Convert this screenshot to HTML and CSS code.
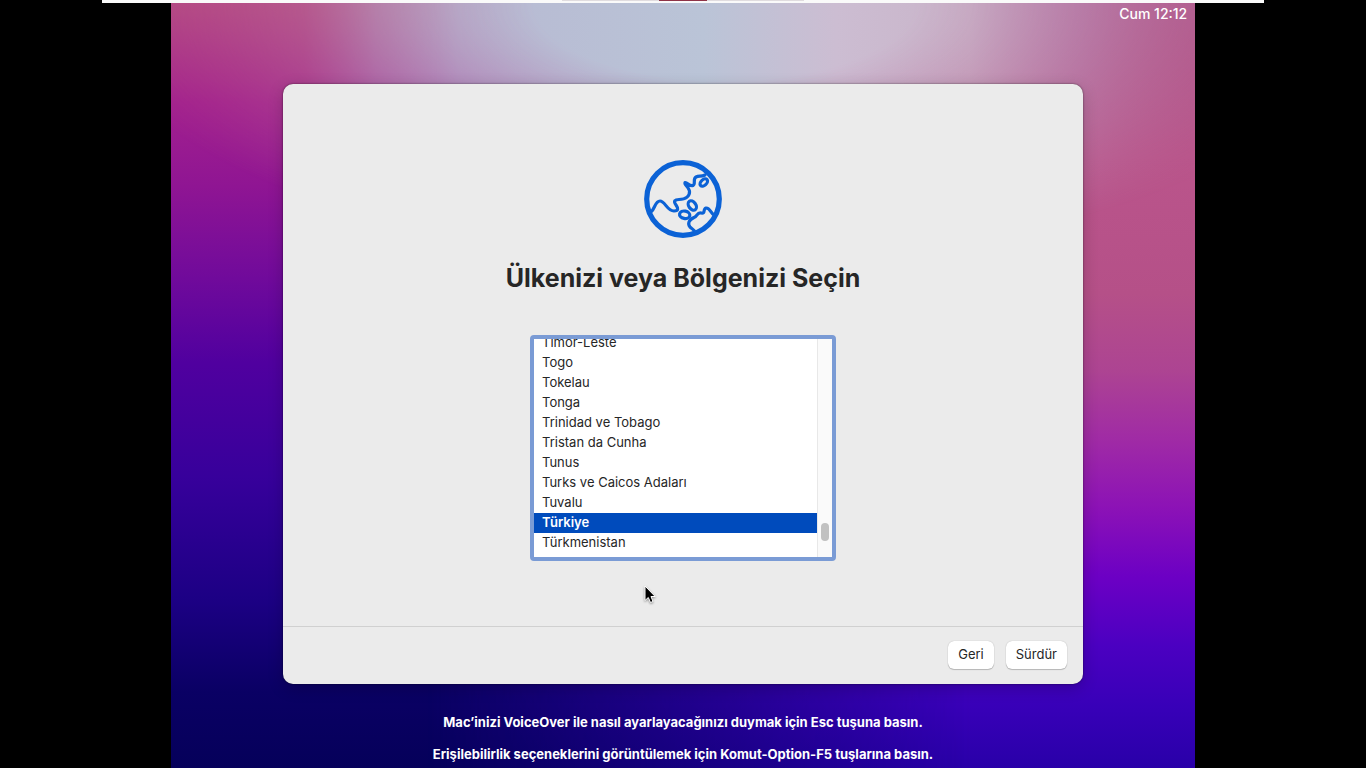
FILE: index.html
```html
<!DOCTYPE html>
<html lang="tr">
<head>
<meta charset="utf-8">
<title>Ülkenizi veya Bölgenizi Seçin</title>
<link rel="stylesheet" href="styles.css">
</head>
<body>
<div class="topbar"><span class="topbar-tab"></span></div>
<div class="desktop">
  <header class="menubar"><time>Cum 12:12</time></header>
  <main class="dialog">
    <section class="dialog-body">
      <svg class="globe" viewBox="0 0 78 78" fill="none" stroke="#0b62d6" aria-hidden="true">
        <circle cx="39" cy="39" r="36.3" stroke-width="5.2"/>
        <g stroke-width="3.2" stroke-linecap="round" stroke-linejoin="round">
          <path d="M7 52C11 49 11 41 16 41C21 41 23 51 30 51C35 51 34 48 32 45C29 41 31 39.500 35 39.500C42 39.500 46 36 45.500 31C45 27 40 25 41 22.500C44 23 45.500 26.500 49 25.500C52 24 48.500 19 52 17C55 15.500 57 17 61 15"/>
          <ellipse cx="59.800" cy="22.500" rx="2.800" ry="4.400" transform="rotate(48 59.800 22.500)"/>
          <ellipse cx="48.300" cy="45.500" rx="3.500" ry="5.200" transform="rotate(-35 48.300 45.500)"/>
          <ellipse cx="40.700" cy="54.800" rx="5.200" ry="3.700" transform="rotate(12 40.700 54.800)"/>
          <path d="M70 55C67 54 66 47.500 62 48C58.500 49 62 54 57 53C52.500 52.500 54 56 50 57.500C44.500 60 43.500 64 46 67C47.500 69 50 69 51 72"/>
        </g>
      </svg>
      <h1 class="title">Ülkenizi veya Bölgenizi Seçin</h1>
      <div class="picker">
        <div class="options" role="radiogroup" aria-label="Ülke veya bölge">
          <label class="option"><input type="radio" name="country">Timor-Leste</label>
          <label class="option"><input type="radio" name="country">Togo</label>
          <label class="option"><input type="radio" name="country">Tokelau</label>
          <label class="option"><input type="radio" name="country">Tonga</label>
          <label class="option"><input type="radio" name="country">Trinidad ve Tobago</label>
          <label class="option"><input type="radio" name="country">Tristan da Cunha</label>
          <label class="option"><input type="radio" name="country">Tunus</label>
          <label class="option"><input type="radio" name="country">Turks ve Caicos Adaları</label>
          <label class="option"><input type="radio" name="country">Tuvalu</label>
          <label class="option"><input type="radio" name="country" checked>Türkiye</label>
          <label class="option"><input type="radio" name="country">Türkmenistan</label>
        </div>
        <div class="scrollbar"><span class="thumb"></span></div>
      </div>
      <svg class="pointer" viewBox="0 0 12 20" aria-hidden="true"><path d="M1 1V15.500L4.300 12.500L6.500 17.500L9 16.500L7 11.500H11.200Z" fill="#000" stroke="#fff"/></svg>
    </section>
    <footer class="actions">
      <button class="button" type="button">Geri</button>
      <button class="button" type="button">Sürdür</button>
    </footer>
  </main>
  <div class="hints">
    <p>Mac’inizi VoiceOver ile nasıl ayarlayacağınızı duymak için Esc tuşuna basın.</p>
    <p>Erişilebilirlik seçeneklerini görüntülemek için Komut-Option-F5 tuşlarına basın.</p>
  </div>
</div>
</body>
</html>
```
FILE: styles.css
```css
* { box-sizing: border-box; }

body {
  margin: 0;
  min-height: 100vh;
  display: flex;
  flex-direction: column;
  align-items: center;
  background: #000;
  color: #262626;
  font: 13px/20px Inter, "Liberation Sans", sans-serif;
}

.topbar {
  width: 85%;
  height: 3px;
  display: flex;
  justify-content: center;
  align-items: flex-start;
  background: #fafafa;
}

.topbar-tab {
  width: 242px;
  height: 1px;
  background: linear-gradient(to right, #e0dcdf 97px, #8e3347 97px 145px, #e0dcdf 145px);
}

.desktop {
  position: relative;
  isolation: isolate;
  width: 75%;
  flex: 1;
  display: flex;
  flex-direction: column;
  align-items: center;
  background: linear-gradient(to bottom, #b54b85 0%, #a3218e 13%, #8f1593 24%, #700a9b 36%, #50009f 47%, #37009b 62%, #1c0084 78%, #0a0064 90%, #05005a 100%);
}

.desktop::before,
.desktop::after {
  content: "";
  position: absolute;
  inset: 0;
  z-index: -1;
}

.desktop::before {
  background: linear-gradient(to bottom, #b55f92 0%, #ba558b 20%, #b55088 38%, #ad4492 48%, #a02ba5 57%, #8c12b6 66%, #6c00c4 75%, #4b00c1 84%, #3800b8 92%, #2900a8 100%);
  mask-image: linear-gradient(to right, transparent 25%, #000 78%);
}

.desktop::after {
  background: linear-gradient(to right, #b54b85 0%, #b76996 13%, #b69dbd 20%, #b7b9d2 28%, #bac4d7 52%, #ccbdd2 65%, #c9b4c9 78%, #b98db3 89%, #b0628f 100%);
  mask-image: radial-gradient(ellipse 62% 34% at 54% 0, #000 30%, transparent 100%);
}

.menubar {
  align-self: stretch;
  height: 81px;
  padding: 1px 8px;
  text-align: right;
  color: #fff;
  font-size: 14px;
  font-weight: 500;
}

.dialog {
  width: 100%;
  max-width: 800px;
  display: flex;
  flex-direction: column;
  border-radius: 10px;
  background: #ebebeb;
  box-shadow: 0 0 2px rgba(0, 0, 0, .6), 0 4px 16px rgba(0, 0, 0, .2);
}

.dialog-body {
  position: relative;
  display: flex;
  flex-direction: column;
  align-items: center;
  padding: 76px 20px 65px;
}

.globe { width: 78px; height: 78px; }

.title {
  margin: 24px 0 41px;
  font-size: 25px;
  line-height: 32px;
  font-weight: 700;
}

.picker {
  width: 306px;
  height: 226px;
  display: flex;
  overflow: hidden;
  border: 4px solid #7a9bd5;
  border-radius: 4px;
  background: #fff;
}

.options {
  flex: 1;
  display: flex;
  flex-direction: column;
  justify-content: flex-end;
  padding-bottom: 4px;
}

.option {
  position: relative;
  flex: none;
  padding: 0 8px 2px;
  line-height: 18px;
}

.option input {
  position: absolute;
  margin: 0;
  opacity: 0;
}

.option:has(:checked) {
  background: #004bbc;
  color: #fff;
  font-weight: 600;
}

.scrollbar {
  width: 15px;
  display: flex;
  flex-direction: column;
  align-items: center;
  justify-content: flex-end;
  padding-bottom: 16px;
  border-left: 1px solid #e8e8e8;
  background: #fafafa;
}

.thumb {
  width: 8px;
  height: 18px;
  border-radius: 4px;
  background: #c1c1c1;
}

.pointer {
  position: absolute;
  left: 361px;
  top: 501px;
  width: 12px;
  height: 20px;
  filter: drop-shadow(0 1px 1px rgba(0, 0, 0, .4));
}

.actions {
  display: flex;
  justify-content: flex-end;
  gap: 12px;
  padding: 14px 16px 15px;
  border-top: 1px solid #d0d0d0;
}

.button {
  height: 28px;
  padding: 0 10px 2px;
  border: 0;
  border-radius: 6px;
  background: #fff;
  color: #262626;
  font: inherit;
  box-shadow: 0 0 1px rgba(0, 0, 0, .3), 0 1px 1px rgba(0, 0, 0, .2);
}

.hints {
  display: flex;
  flex-direction: column;
  gap: 12px;
  padding: 28px 0 4px;
  color: #fff;
  font-weight: 700;
  text-align: center;
}

.hints p { margin: 0; }
```
